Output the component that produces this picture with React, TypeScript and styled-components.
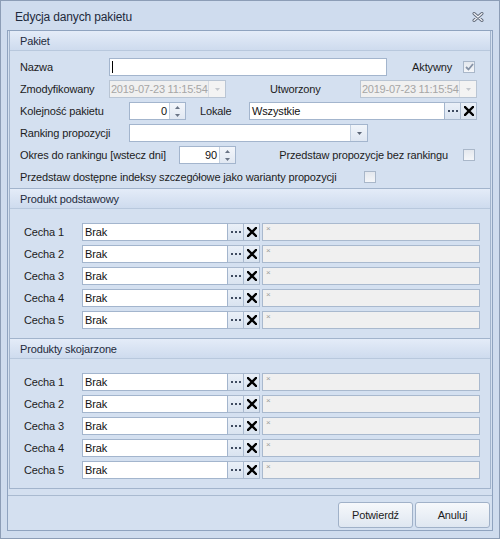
import React from 'react';
import styled, { createGlobalStyle } from 'styled-components';

const GlobalStyle = createGlobalStyle`
  html, body {
    margin: 0;
    padding: 0;
  }
  body {
    font-family: "Liberation Sans", Arial, sans-serif;
    font-size: 11px;
    letter-spacing: -0.15px;
    color: #1c1c1c;
    background: #cfdcee;
  }
  * {
    box-sizing: border-box;
  }
`;

const Window = styled.div`
  width: 500px;
  height: 539px;
  border: 1px solid #8c9db6;
  background: #cfdcee;
  display: flex;
  flex-direction: column;
  padding: 0 6px 7px;
`;

const TitleBar = styled.div`
  height: 29px;
  flex-shrink: 0;
  display: flex;
  align-items: center;
  justify-content: space-between;
  padding: 3px 9px 0 8px;
  font-size: 12px;
  color: #1e2a3c;
`;

const Panel = styled.div`
  flex: 1;
  display: flex;
  flex-direction: column;
  border: 1px solid #8fa3bf;
  background: #d4e0f0;
`;

const Group = styled.div`
  margin: 0 1px;
  border: 1px solid #a2b4cc;
  border-top: none;
`;

const GroupHeader = styled.div`
  height: 20px;
  display: flex;
  align-items: center;
  padding-left: 10px;
  background: linear-gradient(#e4ecf8, #cedbee);
  border-bottom: 1px solid #b8c8dd;
  color: #1e2a3c;
`;

const GroupBody = styled.div<{ $pad: string }>`
  display: flex;
  flex-direction: column;
  gap: 4px;
  padding: ${(p) => p.$pad};
`;

const Row = styled.div`
  display: flex;
  align-items: center;
  height: 18px;
`;

const Label = styled.span<{ $w?: number; $ml?: number }>`
  flex-shrink: 0;
  white-space: nowrap;
  width: ${(p) => (p.$w ? `${p.$w}px` : 'auto')};
  margin-left: ${(p) => p.$ml ?? 0}px;
`;

const RightLabel = styled.span`
  margin-left: auto;
  white-space: nowrap;
`;

const TextInput = styled.div<{ $w?: number }>`
  height: 18px;
  width: ${(p) => (p.$w ? `${p.$w}px` : 'auto')};
  flex: ${(p) => (p.$w ? '0 0 auto' : '1')};
  display: flex;
  align-items: center;
  padding-left: 2px;
  background: #fff;
  border: 1px solid #a3b5cd;
  color: #111;
`;

const Caret = styled.span`
  width: 1px;
  height: 12px;
  background: #000;
`;

const Combo = styled.div<{ $w: number; $disabled?: boolean }>`
  width: ${(p) => p.$w}px;
  height: 18px;
  flex-shrink: 0;
  display: flex;
  background: ${(p) => (p.$disabled ? '#f0f0f0' : '#fff')};
  border: 1px solid ${(p) => (p.$disabled ? '#b9c5d4' : '#a3b5cd')};
  color: ${(p) => (p.$disabled ? '#a6a6a6' : '#111')};
`;

const ComboText = styled.span`
  flex: 1;
  display: flex;
  align-items: center;
  padding-left: 1px;
  letter-spacing: -0.25px;
  white-space: nowrap;
  overflow: hidden;
`;

const ArrowBox = styled.span<{ $disabled?: boolean }>`
  width: 17px;
  flex-shrink: 0;
  display: flex;
  align-items: center;
  justify-content: center;
  border-left: 1px solid ${(p) => (p.$disabled ? '#d6dce4' : '#c3d0e0')};
  background: ${(p) => (p.$disabled ? '#f3f3f3' : 'linear-gradient(#f1f5fa, #dfe7f2)')};
  color: ${(p) => (p.$disabled ? '#c4c8ce' : '#5c6677')};
`;

const Spin = styled.div<{ $ml?: number }>`
  width: 57px;
  height: 18px;
  flex-shrink: 0;
  margin-left: ${(p) => p.$ml ?? 0}px;
  display: flex;
  background: #fff;
  border: 1px solid #a3b5cd;
`;

const SpinValue = styled.span`
  flex: 1;
  display: flex;
  align-items: center;
  justify-content: flex-end;
  padding-right: 2px;
  color: #111;
`;

const SpinButtons = styled.span`
  width: 16px;
  display: flex;
  flex-direction: column;
  border-left: 1px solid #c3d0e0;
  background: linear-gradient(#f3f6fb, #e1e8f2);
`;

const SpinHalf = styled.span`
  flex: 1;
  display: flex;
  align-items: center;
  justify-content: center;
  color: #6a7485;
`;

const SideButton = styled.span`
  width: 16px;
  height: 18px;
  flex-shrink: 0;
  display: flex;
  align-items: center;
  justify-content: center;
  background: linear-gradient(#eaf0f8, #d9e3f0);
  border: 1px solid #a9b9ce;
  border-left: none;
`;

const Check = styled.span<{ $ml?: number; $mr?: number }>`
  width: 12px;
  height: 12px;
  flex-shrink: 0;
  margin-left: ${(p) => p.$ml ?? 0}px;
  margin-right: ${(p) => p.$mr ?? 0}px;
  display: flex;
  align-items: center;
  justify-content: center;
  border: 1px solid #a9b7c9;
  background: linear-gradient(#e4e8ee, #f4f6f9);
`;

const Disabled = styled.div`
  flex: 1;
  height: 18px;
  margin-left: 2px;
  padding: 0 0 0 3px;
  background: #f0f0f0;
  border: 1px solid #a9b9ce;
  color: #9c9c9c;
  font-size: 8px;
  line-height: 9px;
`;

const Footer = styled.div`
  margin-top: auto;
  height: 35px;
  display: flex;
  justify-content: flex-end;
  gap: 2px;
  padding: 6px 2px 0 0;
  border-top: 1px solid #a9bad0;
`;

const Button = styled.button`
  width: 75px;
  height: 26px;
  padding: 0;
  font-family: inherit;
  font-size: 11px;
  letter-spacing: inherit;
  color: #1c1c1c;
  border: 1px solid #a0b1c8;
  border-radius: 3px;
  background: linear-gradient(#f6f8fb, #dfe7f1);
`;

const Down = ({ color = 'currentColor' }: { color?: string }) => (
  <svg width="5" height="3" viewBox="0 0 5 3">
    <path d="M0 0h5L2.5 3z" fill={color} />
  </svg>
);

const Up = () => (
  <svg width="5" height="3" viewBox="0 0 5 3">
    <path d="M0 3h5L2.5 0z" fill="currentColor" />
  </svg>
);

const Dots = () => (
  <svg width="10" height="2" viewBox="0 0 10 2">
    <rect x="0" y="0" width="2" height="2" fill="#3f4b60" />
    <rect x="4" y="0" width="2" height="2" fill="#3f4b60" />
    <rect x="8" y="0" width="2" height="2" fill="#3f4b60" />
  </svg>
);

const Cross = () => (
  <svg width="10" height="10" viewBox="0 0 10 10">
    <path d="M1 1l8 8M9 1l-8 8" stroke="#000" strokeWidth="2.4" strokeLinecap="square" />
  </svg>
);

const Tick = () => (
  <svg width="9" height="8" viewBox="0 0 9 8">
    <path d="M1 4l2.5 2.5L8 1" stroke="#8592a6" strokeWidth="1.8" fill="none" />
  </svg>
);

const CloseIcon = () => (
  <svg width="12" height="10" viewBox="0 0 12 10">
    <path d="M2 1.5l8 7M10 1.5l-8 7" stroke="#5f6878" strokeWidth="3" strokeLinecap="round" />
    <path d="M2 1.5l8 7M10 1.5l-8 7" stroke="#f4f6fa" strokeWidth="1.2" strokeLinecap="round" />
  </svg>
);

const DateCombo = ({ value }: { value: string }) => (
  <Combo $w={117} $disabled>
    <ComboText>{value}</ComboText>
    <ArrowBox $disabled>
      <Down />
    </ArrowBox>
  </Combo>
);

const SpinBox = ({ value, ml }: { value: string; ml?: number }) => (
  <Spin $ml={ml}>
    <SpinValue>{value}</SpinValue>
    <SpinButtons>
      <SpinHalf>
        <Up />
      </SpinHalf>
      <SpinHalf>
        <Down />
      </SpinHalf>
    </SpinButtons>
  </Spin>
);

const PickerButtons = () => (
  <>
    <SideButton>
      <Dots />
    </SideButton>
    <SideButton>
      <Cross />
    </SideButton>
  </>
);

const features = [1, 2, 3, 4, 5];

const FeatureGroup = ({ title, pad }: { title: string; pad: string }) => (
  <Group>
    <GroupHeader>{title}</GroupHeader>
    <GroupBody $pad={pad}>
      {features.map((n) => (
        <Row key={n}>
          <Label $w={58}>Cecha {n}</Label>
          <TextInput $w={146}>Brak</TextInput>
          <PickerButtons />
          <Disabled>×</Disabled>
        </Row>
      ))}
    </GroupBody>
  </Group>
);

export default function App() {
  return (
    <>
      <GlobalStyle />
      <Window>
        <TitleBar>
          <span>Edycja danych pakietu</span>
          <CloseIcon />
        </TitleBar>
        <Panel>
          <Group>
            <GroupHeader>Pakiet</GroupHeader>
            <GroupBody $pad="7px 13px 2px 10px">
              <Row>
                <Label $w={89}>Nazwa</Label>
                <TextInput $w={278}>
                  <Caret />
                </TextInput>
                <RightLabel>Aktywny</RightLabel>
                <Check $ml={11} $mr={2}>
                  <Tick />
                </Check>
              </Row>
              <Row>
                <Label $w={89}>Zmodyfikowany</Label>
                <DateCombo value="2019-07-23 11:15:54" />
                <Label $ml={44}>Utworzony</Label>
                <RightLabel />
                <DateCombo value="2019-07-23 11:15:54" />
              </Row>
              <Row>
                <Label $w={109}>Kolejność pakietu</Label>
                <SpinBox value="0" />
                <Label $w={49} $ml={14}>
                  Lokale
                </Label>
                <TextInput>Wszystkie</TextInput>
                <PickerButtons />
              </Row>
              <Row>
                <Label $w={109}>Ranking propozycji</Label>
                <Combo $w={239}>
                  <ComboText />
                  <ArrowBox>
                    <Down />
                  </ArrowBox>
                </Combo>
              </Row>
              <Row>
                <Label $w={159}>Okres do rankingu [wstecz dni]</Label>
                <SpinBox value="90" />
                <RightLabel>Przedstaw propozycje bez rankingu</RightLabel>
                <Check $ml={15} $mr={2} />
              </Row>
              <Row>
                <Label $w={344}>Przedstaw dostępne indeksy szczegółowe jako warianty propozycji</Label>
                <Check />
              </Row>
            </GroupBody>
          </Group>
          <FeatureGroup title="Produkt podstawowy" pad="14px 10px 9px 14px" />
          <FeatureGroup title="Produkty skojarzone" pad="14px 10px 9px 14px" />
          <Footer>
            <Button>Potwierdź</Button>
            <Button>Anuluj</Button>
          </Footer>
        </Panel>
      </Window>
    </>
  );
}
